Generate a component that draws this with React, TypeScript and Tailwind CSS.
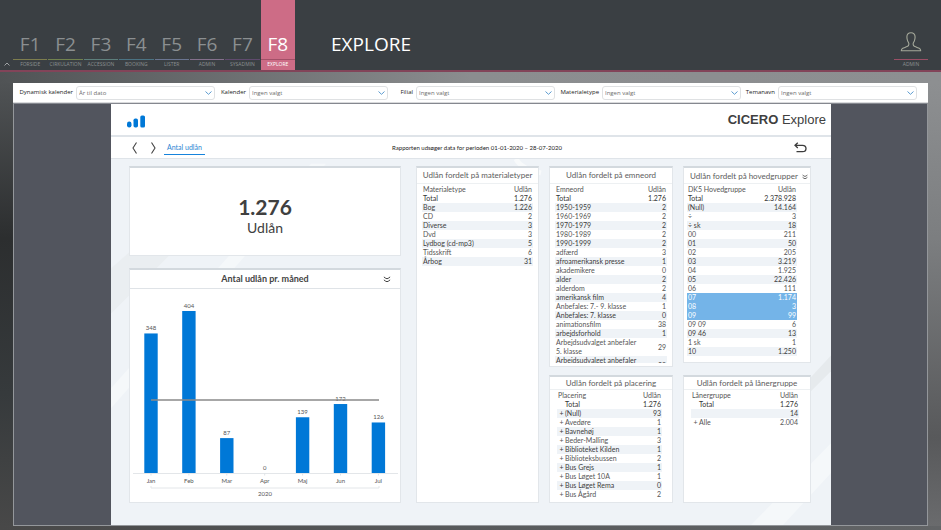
import { useState } from "react";
import clsx from "clsx";

type Row = {
  label: string;
  value: string;
  expandable?: boolean;
  selected?: boolean;
};

const tabs = [
  { key: "F1", label: "FORSIDE", line: "bg-[#7d7d4e]" },
  { key: "F2", label: "CIRKULATION", line: "bg-[#71824f]" },
  { key: "F3", label: "ACCESSION", line: "bg-[#5d7f7c]" },
  { key: "F4", label: "BOOKING", line: "bg-[#4b7383]" },
  { key: "F5", label: "LISTER", line: "bg-[#6a7591]" },
  { key: "F6", label: "ADMIN", line: "bg-[#84708c]" },
  { key: "F7", label: "SYSADMIN", line: "bg-[#5f4a6e]" },
  { key: "F8", label: "EXPLORE", line: "bg-[#a35068]" },
];

const filters = [
  { id: "dynamic", label: "Dynamisk kalender", value: "År til dato" },
  { id: "calendar", label: "Kalender", value: "Ingen valgt" },
  { id: "branch", label: "Filial", value: "Ingen valgt" },
  { id: "material", label: "Materialetype", value: "Ingen valgt" },
  { id: "theme", label: "Temanavn", value: "Ingen valgt" },
];

const months = [
  { name: "Jan", count: 348 },
  { name: "Feb", count: 404 },
  { name: "Mar", count: 87 },
  { name: "Apr", count: 0 },
  { name: "Maj", count: 139 },
  { name: "Jun", count: 172 },
  { name: "Jul", count: 126 },
];

const materials: Row[] = [
  { label: "Bog", value: "1.226" },
  { label: "CD", value: "2" },
  { label: "Diverse", value: "3" },
  { label: "Dvd", value: "3" },
  { label: "Lydbog (cd-mp3)", value: "5" },
  { label: "Tidsskrift", value: "6" },
  { label: "Årbog", value: "31" },
];

const subjects: Row[] = [
  { label: "1950-1959", value: "2" },
  { label: "1960-1969", value: "2" },
  { label: "1970-1979", value: "2" },
  { label: "1980-1989", value: "2" },
  { label: "1990-1999", value: "2" },
  { label: "adfærd", value: "3" },
  { label: "afroamerikansk presse", value: "1" },
  { label: "akademikere", value: "0" },
  { label: "alder", value: "2" },
  { label: "alderdom", value: "2" },
  { label: "amerikansk film", value: "4" },
  { label: "Anbefales: 7.- 9. klasse", value: "1" },
  { label: "Anbefales: 7. klasse", value: "0" },
  { label: "animationsfilm", value: "38" },
  { label: "arbejdsforhold", value: "1" },
  { label: "Arbejdsudvalget anbefaler 5. klasse", value: "29" },
  { label: "Arbejdsudvalget anbefaler 6. klasse", value: "20" },
];

const groups: Row[] = [
  { label: "(Null)", value: "14.164" },
  { label: "÷", value: "3" },
  { label: "÷ sk", value: "18" },
  { label: "00", value: "211" },
  { label: "01", value: "50" },
  { label: "02", value: "205" },
  { label: "03", value: "3.219" },
  { label: "04", value: "1.925" },
  { label: "05", value: "22.426" },
  { label: "06", value: "111" },
  { label: "07", value: "1.174", selected: true },
  { label: "08", value: "3", selected: true },
  { label: "09", value: "99", selected: true },
  { label: "09 09", value: "6" },
  { label: "09 46", value: "13" },
  { label: "1 sk", value: "1" },
  { label: "10", value: "1.250" },
];

const placements: Row[] = [
  { label: "(Null)", value: "93", expandable: true },
  { label: "Avedøre", value: "1", expandable: true },
  { label: "Bavnehøj", value: "1", expandable: true },
  { label: "Beder-Malling", value: "3", expandable: true },
  { label: "Biblioteket Kilden", value: "1", expandable: true },
  { label: "Biblioteksbussen", value: "2", expandable: true },
  { label: "Bus Grejs", value: "1", expandable: true },
  { label: "Bus Løget 10A", value: "1", expandable: true },
  { label: "Bus Løget Rema", value: "0", expandable: true },
  { label: "Bus Ågård", value: "2", expandable: true },
];

const borrowers: Row[] = [
  { label: "", value: "14" },
  { label: "Alle", value: "2.004", expandable: true },
];

function DoubleChevron({ className }: { className?: string }) {
  return (
    <svg className={className} viewBox="0 0 10 9" fill="none" stroke="currentColor" strokeWidth="1.2">
      <path d="M1 1.2 3.3 2.9 5 3.5 6.7 2.9 9 1.2" />
      <path d="M1 5 3.3 6.7 5 7.3 6.7 6.7 9 5" />
    </svg>
  );
}

function TopBar() {
  const [active, setActive] = useState("F8");

  return (
    <header className="flex h-[72px] border-b-2 border-[#824459] bg-[#3a3f43] font-['Open_Sans',sans-serif]">
      <button aria-label="Skjul menu" className="flex w-[13px] items-end justify-center pb-1 text-[#a0a3a5]">
        <svg className="h-1 w-1.5" viewBox="0 0 6 4" fill="none" stroke="currentColor">
          <path d="M.5 3.5 3 1 5.5 3.5" />
        </svg>
      </button>
      <nav className="grid w-[282px] grid-cols-8 gap-px">
        {tabs.map(tab => (
          <button
            key={tab.key}
            onClick={() => setActive(tab.key)}
            className={clsx(
              "flex flex-col items-center justify-end",
              tab.key === active ? "bg-[#cd6c86] text-white" : "text-[#8b8f91]"
            )}
          >
            <span className="mb-[3px] text-[19px] leading-6">{tab.key}</span>
            <span className={clsx("h-px w-full", tab.line)} />
            <span className="h-[10px] text-[5px] leading-[8px]">{tab.label}</span>
          </button>
        ))}
      </nav>
      <h1 className="ml-9 self-end pb-[14px] text-[19px] leading-6 text-white">EXPLORE</h1>
      <button className="mr-[13px] ml-auto flex w-[34px] flex-col items-center justify-end text-[#8d9092]">
        <svg
          className="mb-[7px] h-5 w-[22px]"
          viewBox="0 0 22 20"
          fill="none"
          stroke="#a5a99b"
          strokeWidth="1.1"
          strokeLinejoin="round"
        >
          <path d="M11 .8C8.5.8 6.9 2.5 6.9 5c0 1.5.3 2.8.8 4 .5 1.1 1.2 1.7 1.2 2.9 0 1.5-.5 2.2-1.7 2.7-1.6.7-3.5 1.1-4.5 1.7-.9.5-1.3 1.4-1.4 2.5h19.4c-.1-1.1-.5-2-1.4-2.5-1-.6-2.9-1-4.5-1.7-1.2-.5-1.7-1.2-1.7-2.7 0-1.2.7-1.8 1.2-2.9.5-1.2.8-2.5.8-4C15.1 2.5 13.5.8 11 .8Z" />
        </svg>
        <span className="h-px w-full bg-[#9a4f66]" />
        <span className="h-[10px] text-[5px] leading-[8px]">ADMIN</span>
      </button>
    </header>
  );
}

function FilterBar() {
  return (
    <form className="grid h-5 grid-cols-[202fr_173fr_167fr_186fr_176fr] items-center border-b border-[#d9dadc] bg-white pr-[11px] font-['Open_Sans',sans-serif] text-[6px]">
      {filters.map(filter => (
        <div key={filter.id} className="flex items-center justify-end gap-[3px]">
          <label htmlFor={filter.id} className="whitespace-nowrap text-[#1c1c1c]">
            {filter.label}
          </label>
          <div className="relative">
            <select
              id={filter.id}
              className="block h-[14px] w-[139px] appearance-none rounded-[3px] border border-[#dfe1e3] bg-white px-[2px] leading-[12px] text-[#6d6d6d]"
            >
              <option>{filter.value}</option>
            </select>
            <svg
              className="pointer-events-none absolute top-[5px] right-[3px] h-1 w-[7px]"
              viewBox="0 0 7 4"
              fill="none"
              stroke="#5b9bd0"
            >
              <path d="M.5.5 3.5 3.3 6.5.5" />
            </svg>
          </div>
        </div>
      ))}
    </form>
  );
}

function ReportHeader() {
  return (
    <>
      <div className="relative flex h-[33px] items-center justify-between border-b-2 border-[#dfe4e9] bg-white pr-[5px] pl-4">
        <svg className="mt-1 h-[13px] w-[18px]" viewBox="0 0 18 13" fill="#0078d7">
          <rect x="0" y="6.5" width="4.5" height="6" rx="2.2" />
          <rect x="6.5" y="3.5" width="4.5" height="9" rx="1.8" />
          <rect x="13.3" y=".5" width="4.7" height="12" rx="1.6" />
        </svg>
        <p className="font-['Liberation_Sans_Narrow','Liberation_Sans',sans-serif] text-[13px] leading-none text-[#404040]">
          <b>CICERO</b> Explore
        </p>
      </div>
      <div className="relative flex h-[22px] items-center border-b border-[#dfe4e9] bg-white">
        <div className="flex flex-1 items-center">
          <button aria-label="Forrige" className="ml-[21px]">
            <svg className="h-3 w-[5px]" viewBox="0 0 5 12" fill="none" stroke="#444" strokeWidth="1.1">
              <path d="M4.5.5 1 6l3.5 5.5" />
            </svg>
          </button>
          <button aria-label="Næste" className="ml-[14px]">
            <svg className="h-3 w-[5px]" viewBox="0 0 5 12" fill="none" stroke="#444" strokeWidth="1.1">
              <path d="M.5.5 4 6 .5 11.5" />
            </svg>
          </button>
          <a href="#" className="ml-2 border-b border-[#1583dc] px-[3px] text-[7px] leading-[14px] text-[#2b86d3]">
            Antal udlån
          </a>
        </div>
        <p className="pl-3 text-[6px] text-[#222]">Rapporten udsøger data for perioden 01-01-2020 – 28-07-2020</p>
        <div className="flex flex-1 justify-end">
          <button aria-label="Fortryd" className="mr-6">
            <svg className="h-[11px] w-[13px]" viewBox="0 0 13 11" fill="none" stroke="#3c3c3c" strokeWidth="1.3">
              <path d="M3.8.7 1 3.3l2.8 2.6M1 3.3h7.5c2.2 0 3.5 1.3 3.5 3.2s-1.3 3.2-3.5 3.2H2.5" />
            </svg>
          </button>
        </div>
      </div>
    </>
  );
}

function Card({ className, children }: { className?: string; children: React.ReactNode }) {
  return (
    <section className={clsx("border border-t-2 border-[#e2e6ea] border-t-[#d3d9de] bg-white", className)}>
      {children}
    </section>
  );
}

function TableCard({
  title,
  head,
  total = "1.276",
  rows,
  menu,
  className,
  inset,
}: {
  title: string;
  head: string;
  total?: string;
  rows: Row[];
  menu?: boolean;
  className?: string;
  inset: string;
}) {
  const tree = rows.some(row => row.expandable);

  return (
    <Card className={clsx("flex flex-col", className)}>
      <div
        className={clsx(
          "flex justify-center gap-1 border-b border-[#edf0f2]",
          tree ? "h-[13px]" : "h-4",
          menu ? "items-end pl-1" : "items-start"
        )}
      >
        <h2
          className={clsx(
            "text-[8px] whitespace-nowrap text-[#5c5c5c]",
            tree ? "leading-3" : "leading-[14px]"
          )}
        >
          {title}
        </h2>
        {menu && (
          <button aria-label="Vis mere" className="pb-[3px]">
            <DoubleChevron className="h-[6px] w-[6px] text-[#333]" />
          </button>
        )}
      </div>
      <div className={clsx("min-h-0 flex-1 overflow-hidden pt-px", inset)}>
        <table className="w-full text-[7px] leading-[9px] text-[#555]">
          <thead>
            <tr>
              <th className="px-px text-left font-normal">{head}</th>
              <th className="w-7 px-px text-right font-normal">Udlån</th>
            </tr>
          </thead>
          <tbody>
            <tr className="text-[#333]">
              <td className={tree ? "pl-2" : "px-px"}>Total</td>
              <td className="px-px text-right">{total}</td>
            </tr>
            {rows.map((row, i) => (
              <tr
                key={i}
                className={clsx(
                  row.selected ? "bg-[#74b4e8] text-white" : i % 2 === 0 && "bg-[#eff3f7] text-[#3c3c3c]"
                )}
              >
                <td className="px-px">
                  {row.expandable && (
                    <button aria-label={`Udvid ${row.label}`} className="w-[7px] text-center">
                      +
                    </button>
                  )}
                  {row.label}
                </td>
                <td className="px-px text-right">{row.value}</td>
              </tr>
            ))}
          </tbody>
        </table>
      </div>
    </Card>
  );
}

function LoanChart() {
  const base = 184;
  const step = 37.9;

  return (
    <svg viewBox="0 0 270 213" className="w-full" fontSize="6" fill="#555" textAnchor="middle">
      <path d="M3 184.5H268" stroke="#e3e6e9" />
      {months.map((month, i) => {
        const x = 21 + i * step;
        const height = month.count * 0.401;
        return (
          <g key={month.name}>
            <rect x={x - 6.7} y={base - height} width="13.4" height={height} fill="#0078d7" />
            <text x={x} y={base - height - 3}>
              {month.count}
            </text>
            <path d={`M${x} 184.5v2`} stroke="#dfe3e7" />
            <text x={x} y="194">
              {month.name}
            </text>
          </g>
        );
      })}
      <path d="M21 111H249" stroke="#8a8a8a" strokeWidth="1.5" />
      <path d="M21 197v2H249v-2" fill="none" stroke="#e3e6e9" />
      <text x="135" y="207">
        2020
      </text>
    </svg>
  );
}

export default function App() {
  return (
    <div className="flex min-h-screen flex-col bg-[#444648]">
      <TopBar />
      <div className="h-[11px] bg-linear-to-r from-[#505355] via-[#8b8d8f] to-[#8d8f91]" />
      <div className="grid flex-1 grid-cols-[13px_1fr_13px]">
        <div className="bg-[linear-gradient(#505355,#2c2e2f_35%,#363a3c_70%,#484848)]" />
        <main className="flex flex-col">
          <FilterBar />
          <div className="flex flex-1 border border-[#94979b] border-t-[#85888f] bg-[#52555e] pr-24 pl-[97px]">
            <div className="relative flex flex-1 flex-col bg-[#eff3f7] font-[Lato,sans-serif]">
              <svg
                className="pointer-events-none absolute inset-0 h-full w-full"
                viewBox="0 0 720 422"
                preserveAspectRatio="none"
                fill="none"
              >
                <path d="M0 165 28 140H70L0 210Z" fill="#eaeef1" />
                <path d="M0 285 200 60H215L0 305Z" fill="#f5f8fa" />
                <path d="M640 422 720 340V370L672 422Z" fill="#f5f8fa" />
                <path d="M698 276 720 252V268L700 288Z" fill="#e6eaed" />
                <path d="M405 55c4 8 14 12 25 14" stroke="#f8fafb" strokeWidth="5" />
              </svg>
              <ReportHeader />
              <div className="relative grid flex-1 grid-cols-[272fr_395fr] gap-x-[15px] pt-[7px] pr-5 pb-[22px] pl-[18px]">
                <div className="flex flex-col gap-3">
                  <Card className="flex h-[90px] flex-col items-center justify-center gap-px pt-2 text-[#404040]">
                    <p className="text-[21px] leading-6 font-bold">1.276</p>
                    <p className="text-[14px] leading-4">Udlån</p>
                  </Card>
                  <Card className="flex-1">
                    <div className="relative flex h-[19px] items-center justify-center border-b border-[#dfe3e7]">
                      <h2 className="text-[9px] font-bold text-[#444]">Antal udlån pr. måned</h2>
                      <button aria-label="Vis mere" className="absolute right-[9px]">
                        <DoubleChevron className="h-[7px] w-2 text-[#333]" />
                      </button>
                    </div>
                    <LoanChart />
                  </Card>
                </div>
                <div className="grid grid-cols-[123fr_124fr_128fr] gap-x-[10px]">
                  <TableCard
                    title="Udlån fordelt på materialetyper"
                    head="Materialetype"
                    rows={materials}
                    inset="px-[5px]"
                  />
                  <div className="flex flex-col gap-2">
                    <TableCard
                      title="Udlån fordelt på emneord"
                      head="Emneord"
                      rows={subjects}
                      className="h-[201px] pb-[3px]"
                      inset="px-[5px]"
                    />
                    <TableCard
                      title="Udlån fordelt på placering"
                      head="Placering"
                      rows={placements}
                      className="flex-1"
                      inset="pr-[10px] pl-[7px]"
                    />
                  </div>
                  <div className="flex flex-col gap-3">
                    <TableCard
                      title="Udlån fordelt på hovedgrupper"
                      head="DK5 Hovedgruppe"
                      total="2.378.928"
                      rows={groups}
                      menu
                      className="h-[197px]"
                      inset="pr-[13px] pl-[3px]"
                    />
                    <TableCard
                      title="Udlån fordelt på lånergruppe"
                      head="Lånergruppe"
                      rows={borrowers}
                      className="flex-1"
                      inset="pr-[11px] pl-[7px]"
                    />
                  </div>
                </div>
              </div>
            </div>
          </div>
        </main>
        <div className="bg-[linear-gradient(#8d8f91,#7c7e80_35%,#58595b_80%,#6a6b6d)]" />
      </div>
      <div className="h-1 bg-linear-to-r from-[#484848] via-[#585a5c] to-[#626466]" />
    </div>
  );
}
